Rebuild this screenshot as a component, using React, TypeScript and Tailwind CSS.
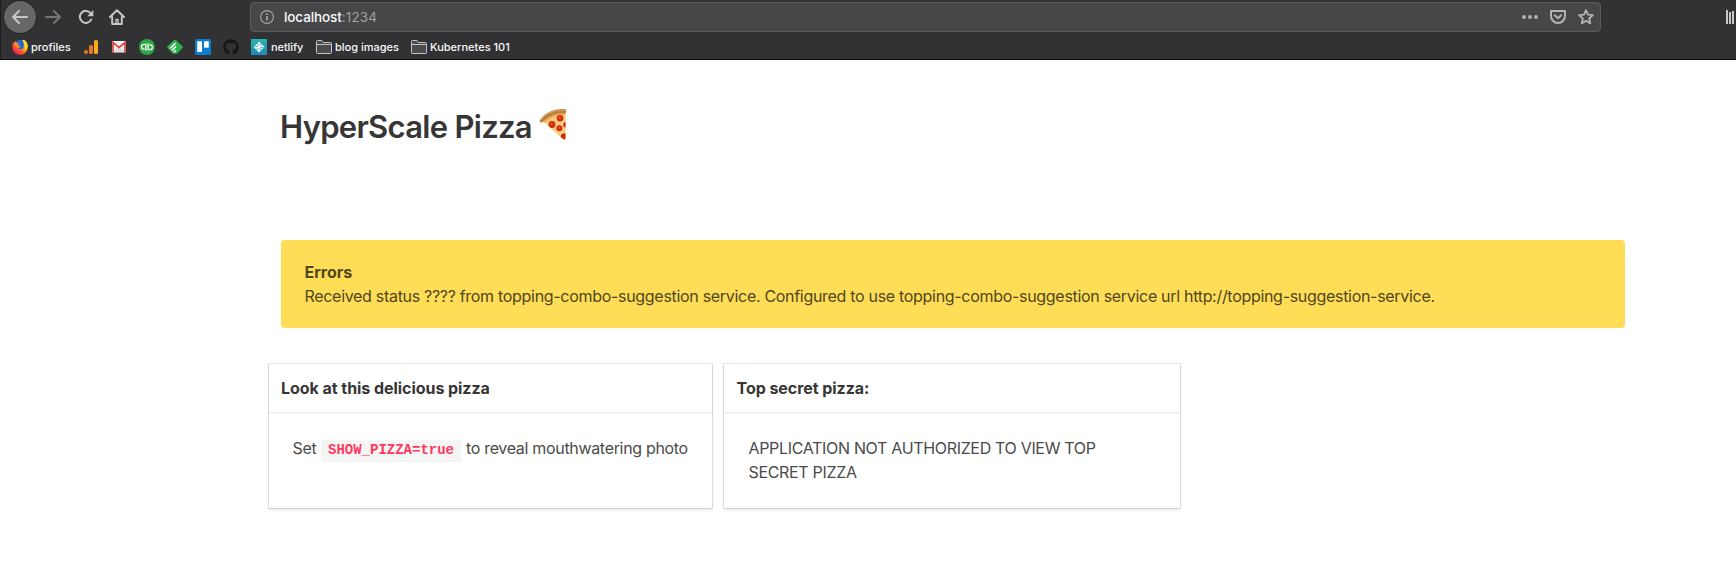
import type { ReactNode } from "react";
import { FaGithub } from "react-icons/fa";

function BackIcon() {
  return (
    <svg width="16" height="14" viewBox="0 0 16 14" fill="none" stroke="currentColor" strokeWidth="2" strokeLinecap="round" strokeLinejoin="round">
      <path d="M15 7H1.5M7 1 1 7l6 6" />
    </svg>
  );
}

function ForwardIcon() {
  return (
    <svg width="16" height="14" viewBox="0 0 16 14" fill="none" stroke="currentColor" strokeWidth="2" strokeLinecap="round" strokeLinejoin="round">
      <path d="M1 7h13.5M9 1l6 6-6 6" />
    </svg>
  );
}

function ReloadIcon() {
  return (
    <svg width="16" height="16" viewBox="0 0 16 16" fill="none">
      <path d="M13.2 10.6A6 6 0 1 1 12.6 4.2" stroke="currentColor" strokeWidth="2" strokeLinecap="round" />
      <path d="M15.3 1v6.2H9.2z" fill="currentColor" />
    </svg>
  );
}

function HomeIcon() {
  return (
    <svg width="16" height="16" viewBox="0 0 16 16" fill="none" stroke="currentColor" strokeWidth="2" strokeLinecap="round" strokeLinejoin="round">
      <path d="M1 8 8 1.2 15 8M3.2 8v7h9.6V8" />
      <path d="M7 15v-4.5h2V15" strokeWidth="1.4" />
    </svg>
  );
}

function InfoIcon() {
  return (
    <svg width="14" height="14" viewBox="0 0 14 14" fill="none" stroke="currentColor">
      <circle cx="7" cy="7" r="6.4" strokeWidth="1.1" />
      <path d="M7 6v4.4M7 3.3v1.6" strokeWidth="1.6" />
    </svg>
  );
}

function DotsIcon() {
  return (
    <svg width="16" height="4" viewBox="0 0 16 4" fill="currentColor">
      <circle cx="2" cy="2" r="1.9" />
      <circle cx="8" cy="2" r="1.9" />
      <circle cx="14" cy="2" r="1.9" />
    </svg>
  );
}

function PocketIcon() {
  return (
    <svg width="16" height="14" viewBox="0 0 16 14" fill="none" stroke="currentColor" strokeWidth="2" strokeLinecap="round" strokeLinejoin="round">
      <path d="M1 1h14v5a7 7 0 0 1-14 0z" />
      <path d="M4.8 5.2 8 8.3l3.2-3.1" />
    </svg>
  );
}

function StarIcon() {
  return (
    <svg width="16" height="16" viewBox="0 0 16 16" fill="none" stroke="currentColor" strokeWidth="1.8" strokeLinejoin="round">
      <path d="m8 1.200 2 4.500 4.900.5-3.700 3.300 1.100 4.900L8 11.800l-4.300 2.600 1.100-4.900L1.100 6.200 6 5.700z" />
    </svg>
  );
}

function FirefoxLogo() {
  return (
    <svg width="16" height="16" viewBox="0 0 16 16">
      <defs>
        <linearGradient id="flame" x1="0.85" y1="0.1" x2="0.15" y2="0.9">
          <stop offset="0" stopColor="#ffe226" />
          <stop offset="0.35" stopColor="#ffb219" />
          <stop offset="0.65" stopColor="#ff5a2c" />
          <stop offset="1" stopColor="#e4146a" />
        </linearGradient>
      </defs>
      <path d="M1.300 3.200 2.600 4.100 3.200 2l1.900 1.900L11.600.8c3 1.500 4.100 4.100 4.100 7.200 0 4.400-3.300 7.800-7.600 7.800S.4 12.600.4 8.300c0-2 .3-3.700.9-5.100z" fill="url(#flame)" />
      <path d="M3.800 3C6 .4 9.500.4 11.300 2.300l.6 3.200-.4 3.200c-1.300 2-4.300 2-5.300.2l2.100-1.300L7.500 6.500l-1.600-.3z" fill="#2267d8" />
      <path d="M3.200 2l1.900 1.900 2.300.3L5.700 6.100l.7 1.300 2.200.1-1.700 1.400-2.400-.5L2.600 5z" fill="#ff8a1c" />
      <path d="M11.600.8c3 1.500 4.100 4.100 4.100 7.200l-3 3c.8-3.500.2-6-1.600-8z" fill="#ffd928" />
    </svg>
  );
}

function AnalyticsLogo() {
  return (
    <svg width="14" height="14" viewBox="0 0 14 14">
      <rect x="10" y="0" width="4" height="14" rx="1.600" fill="#f9ab1a" />
      <rect x="5" y="5" width="4" height="9" rx="1.600" fill="#e8771f" />
      <circle cx="2" cy="12" r="2" fill="#e8771f" />
    </svg>
  );
}

function GmailLogo() {
  return (
    <svg width="14" height="12" viewBox="0 0 14 12">
      <rect width="14" height="11.500" rx="1" fill="#f3f1f0" />
      <path d="M2 10.500 7 5.500l5 5z" fill="#d9d6d4" />
      <path d="M1 11.500V1.500L7 6.300l6-4.800v10" fill="none" stroke="#d8433a" strokeWidth="1.700" />
    </svg>
  );
}

function QuickbooksLogo() {
  return (
    <svg width="16" height="16" viewBox="0 0 16 16" fill="none">
      <circle cx="8" cy="8" r="8" fill="#2ca543" />
      <g stroke="#fff" strokeWidth="1.300">
        <path d="M6.900 11.800V5.300H5a2.400 2.400 0 0 0 0 4.900h.5" />
        <path d="M9.100 4.200v6.500H11a2.400 2.400 0 0 0 0-4.900h-.5" />
      </g>
    </svg>
  );
}

function FeedlyLogo() {
  return (
    <svg width="16" height="14" viewBox="0 0 16 14" fill="none">
      <path d="M6.600.5a2 2 0 0 1 2.800 0l5.900 5.700a1.500 1.500 0 0 1 0 2.100l-4.800 4.900a2 2 0 0 1-1.400.5H6.900a2 2 0 0 1-1.400-.5L.7 8.300a1.500 1.500 0 0 1 0-2.100z" fill="#2bb24c" />
      <path d="m3.600 8 4.500-4.400M5.500 9.900 8.600 6.800M7.300 11.700l1-1" stroke="#fff" strokeWidth="1.500" strokeLinecap="round" />
    </svg>
  );
}

function TrelloLogo() {
  return (
    <svg width="16" height="16" viewBox="0 0 16 16">
      <rect width="16" height="16" rx="1.800" fill="#0b7dcf" />
      <rect x="2.200" y="2.200" width="4.800" height="10.800" rx=".8" fill="#fff" />
      <rect x="9" y="2.200" width="4.800" height="6.600" rx=".8" fill="#fff" />
    </svg>
  );
}

function NetlifyLogo() {
  return (
    <svg width="16" height="16" viewBox="0 0 16 16">
      <defs>
        <linearGradient id="teal" x1="0" y1="0" x2="0" y2="1">
          <stop offset="0" stopColor="#25b5b0" />
          <stop offset="1" stopColor="#2386b8" />
        </linearGradient>
      </defs>
      <rect width="16" height="16" fill="url(#teal)" />
      <path d="m8 2.500 5.500 5.500L8 13.500 2.500 8z" fill="#e4f6f6" />
      <path d="m2.800 7 10.400 2M6 4l4.500 8.200M10.500 4.500 5.500 11" stroke="#2aa3b4" strokeWidth=".8" />
      <circle cx="8" cy="8" r="1.400" fill="#fff" />
    </svg>
  );
}

function FolderIcon() {
  return (
    <svg width="16" height="14" viewBox="0 0 16 14" fill="#4b4b4d" stroke="#c4c4c5" strokeWidth="1">
      <path d="M.5 12.500v-11a1 1 0 0 1 1-1H5.800L7.300 2.500h7.200a1 1 0 0 1 1 1v9a1 1 0 0 1-1 1h-13a1 1 0 0 1-1-1zM.5 4.500h15" />
    </svg>
  );
}

function LibraryIcon() {
  return (
    <svg width="9" height="14" viewBox="0 0 9 14" fill="currentColor">
      <path d="M0 0h2v14H0zM3 2h2v12H3zM6 1h2v13H6z" />
    </svg>
  );
}

function PizzaIcon() {
  return (
    <svg width="28" height="33" viewBox="0 0 28 33">
      <path d="M3 12C9 6 17 3.500 26.500 3.500V31.500c-.6.700-1.700.7-2.500 0z" fill="#f6cd7c" />
      <path d="M3 12C9 6 17 3.500 26.500 3.500V7C17 7 10 10 5 15z" fill="#e9a94f" />
      <path d="M.6 13.200C4.500 5 15 .4 26 1c.8.200 1 .8 1 1.600V5C17 4.600 9 8 3.400 14c-1.200.8-3 .5-2.800-.8z" fill="#b9803f" />
      <path d="M1.500 11.800C6.500 4.800 15 1.800 26.600 2" fill="none" stroke="#d9a860" strokeWidth="1.200" />
      <g fill="#cf2a14">
        <circle cx="21" cy="10.300" r="3.300" />
        <circle cx="13" cy="16.500" r="3.400" />
        <path d="M26.500 13.800a3.100 3.100 0 0 0 0 6z" />
        <circle cx="20.300" cy="20.300" r="3" />
        <path d="M26.500 25.300c-2.500-.2-4.500 1-4.900 3.200l2.400 2.500c1 .6 2 .3 2.500-.5z" />
      </g>
      <g fill="#e8502a">
        <circle cx="20.600" cy="9.700" r="1.400" />
        <circle cx="12.500" cy="15.900" r="1.400" />
        <circle cx="20" cy="19.800" r="1.200" />
      </g>
    </svg>
  );
}

function Bookmark({ className, icon, label }: { className: string; icon: ReactNode; label?: ReactNode }) {
  return (
    <div className={`flex h-4 shrink-0 items-center gap-1 whitespace-nowrap ${className}`}>
      <span className="flex w-4 shrink-0 justify-center">{icon}</span>
      {label}
    </div>
  );
}

function Card({ className, title, children }: { className: string; title: ReactNode; children: ReactNode }) {
  return (
    <section className={`h-36 bg-white shadow-[0_2px_3px_rgba(10,10,10,0.1),0_0_0_1px_rgba(10,10,10,0.1)] ${className}`}>
      <header className="h-12 px-3 py-3 font-bold tracking-[-0.05px] text-[#363636] shadow-[0_1px_2px_rgba(10,10,10,0.1)]">{title}</header>
      <div className="py-6 pr-6 pl-[23.500px]">{children}</div>
    </section>
  );
}

export default function App() {
  return (
    <div className="h-[580px] w-[1736px] overflow-hidden bg-white font-['Inter','Liberation_Sans',sans-serif] text-base leading-6 text-[#4a4a4a]">
      <div className="h-[60px] border-b border-l border-b-[#0c0c0d] border-l-[#1e1e20] bg-[#323234]">
        <div className="flex h-[34px] items-center text-[#c6c6c7]">
          <div className="ml-[3px] flex size-8 items-center justify-center rounded-full bg-[#67676a] shadow-[0_0_0_1px_#252527]">
            <BackIcon />
          </div>
          <div className="ml-[9px] text-[#767678]"><ForwardIcon /></div>
          <div className="ml-[17px]"><ReloadIcon /></div>
          <div className="ml-[15px]"><HomeIcon /></div>
          <div className="ml-[125px] flex h-[30px] w-[1351px] items-center rounded-[4px] border border-[#5b5b5d] bg-[#474749] pr-1.5 pl-[9px]">
            <span className="text-[#a9a9aa]"><InfoIcon /></span>
            <span className="ml-2.5 text-[13.500px] leading-5 text-[#a0a0a2]">
              <span className="font-medium tracking-[-0.1px] text-[#f9f9fa]">localhost</span>
              <span className="tracking-[0.1px]">:1234</span>
            </span>
            <div className="ml-auto flex items-center gap-3 text-[#b4b4b6]">
              <DotsIcon />
              <PocketIcon />
              <StarIcon />
            </div>
          </div>
          <div className="ml-[125px]"><LibraryIcon /></div>
        </div>
        <div className="flex h-[25px] items-center pl-[11px] text-[11px] leading-4 font-medium text-[#f9f9fa]">
          <Bookmark className="w-[71px]" icon={<FirefoxLogo />} label={<span className="-ml-px">profiles</span>} />
          <Bookmark className="w-7" icon={<AnalyticsLogo />} />
          <Bookmark className="w-7" icon={<GmailLogo />} />
          <Bookmark className="w-7" icon={<QuickbooksLogo />} />
          <Bookmark className="w-7" icon={<FeedlyLogo />} />
          <Bookmark className="w-7" icon={<TrelloLogo />} />
          <Bookmark className="w-7" icon={<FaGithub size={16} color="#161618" />} />
          <Bookmark className="w-[65px]" icon={<NetlifyLogo />} label={<span className="tracking-[-0.1px]">netlify</span>} />
          <Bookmark className="w-[95px]" icon={<FolderIcon />} label={<span className="-ml-px">blog images</span>} />
          <Bookmark className="w-[110px]" icon={<FolderIcon />} label={<span className="-ml-px">Kubernetes 101</span>} />
        </div>
      </div>

      <main>
        <div className="flex h-[180px] items-start pt-12 pl-[280px]">
          <h1 className="w-[252px] pt-px text-[31px] leading-9 font-semibold tracking-[-0.700px] whitespace-nowrap text-[#363636]">HyperScale Pizza</h1>
          <span className="ml-[7px]"><PizzaIcon /></span>
        </div>

        <div className="ml-[281px] h-[88px] w-[1344px] rounded bg-[#ffdd57] pr-6 pl-[23.500px] py-5 whitespace-nowrap text-[#50471f]">
          <p className="font-bold"><span>Errors</span></p>
          <p className="tracking-[-0.304px]">Received status ???? from topping-combo-suggestion service. Configured to use topping-combo-suggestion service url http://topping-suggestion-service.</p>
        </div>

        <div className="mt-9 ml-[269px] flex gap-3">
          <Card className="w-[443px]" title={<span>Look at this delicious pizza</span>}>
            <p className="flex items-start whitespace-nowrap">
              <span className="w-[28.500px] tracking-[-0.300px]">Set</span>
              <code className="mt-1 h-[22px] w-[140px] bg-[#f5f5f5] px-[7px] font-['Liberation_Mono',monospace] text-sm leading-[21px] font-bold text-[#ff3860]">SHOW_PIZZA=true</code>
              <span className="ml-[5px] tracking-[-0.320px]">to reveal mouthwatering photo</span>
            </p>
          </Card>
          <Card className="w-[456px]" title={<span className="ml-[0.500px]">Top secret pizza:</span>}>
            <p className="ml-px tracking-[-0.325px]">APPLICATION NOT AUTHORIZED TO VIEW TOP<br />SECRET PIZZA</p>
          </Card>
        </div>
      </main>
    </div>
  );
}
